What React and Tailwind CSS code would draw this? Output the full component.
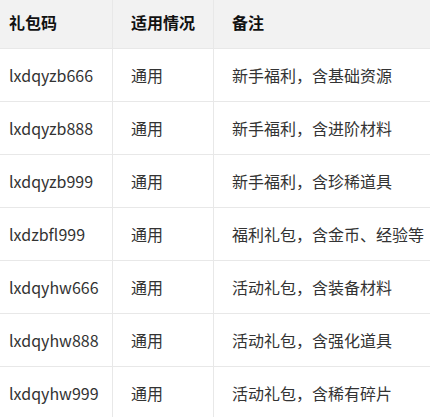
import React from "react";

const rows = [
  ["lxdqyzb666", "通用", "新手福利，含基础资源"],
  ["lxdqyzb888", "通用", "新手福利，含进阶材料"],
  ["lxdqyzb999", "通用", "新手福利，含珍稀道具"],
  ["lxdzbfl999", "通用", "福利礼包，含金币、经验等"],
  ["lxdqyhw666", "通用", "活动礼包，含装备材料"],
  ["lxdqyhw888", "通用", "活动礼包，含强化道具"],
  ["lxdqyhw999", "通用", "活动礼包，含稀有碎片"],
];

function Row({ cells, header }) {
  const base = "flex items-center h-[53px] border-b border-[#e8e8e8] px-[18px] whitespace-nowrap";
  return (
    <div className={header ? "flex bg-[#f2f2f2]" : "flex bg-white"}>
      <div className={`${base} w-[122px] border-r`}>{cells[0]}</div>
      <div className={`${base} w-[101px] border-r`}>{cells[1]}</div>
      <div className={`${base} w-[240px]`}>{cells[2]}</div>
    </div>
  );
}

export default function App() {
  return (
    <div className="w-[430px] h-[417px] overflow-hidden bg-white">
      <div
        className="-mt-[4px] -ml-[9px] w-[463px] text-[16px] text-[#333333]"
        style={{ fontFamily: '"Noto Sans CJK SC", "Noto Sans", sans-serif' }}
      >
        <div className="font-bold text-[#111111]">
          <Row header cells={["礼包码", "适用情况", "备注"]} />
        </div>
        {rows.map((r) => (
          <Row key={r[0]} cells={r} />
        ))}
      </div>
    </div>
  );
}
